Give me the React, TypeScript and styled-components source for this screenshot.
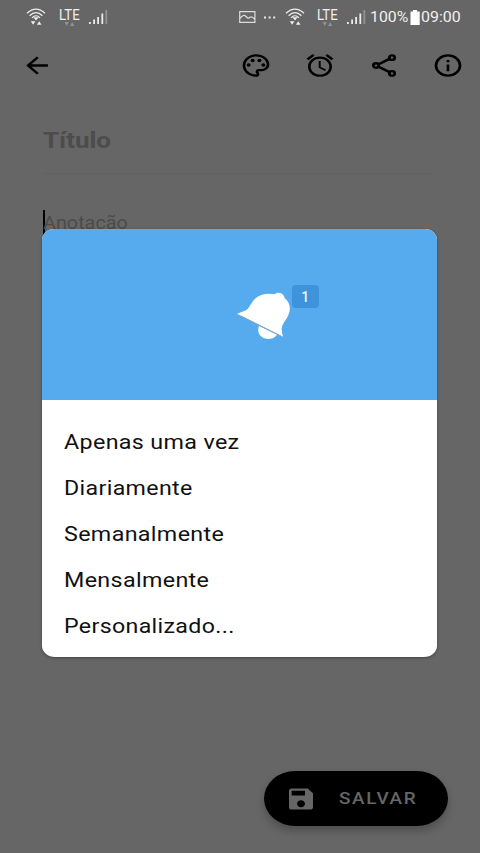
import React from "react";
import styled, { createGlobalStyle } from "styled-components";

const GlobalStyle = createGlobalStyle`
  * { box-sizing: border-box; }
  body { margin: 0; background: #666; font-family: Roboto, "Liberation Sans", sans-serif; }
`;

const Screen = styled.div`
  position: relative;
  width: 480px;
  height: 853px;
  overflow: hidden;
  background: #666;
  display: flex;
  flex-direction: column;
`;

/* Text widened horizontally, anchored at its left edge */
const Wide = styled.span<{ $x: number }>`
  display: inline-block;
  white-space: nowrap;
  transform: scaleX(${(p) => p.$x});
  transform-origin: left center;
`;

const StatusBar = styled.header`
  height: 33px;
  flex: none;
  display: flex;
  justify-content: space-between;
  padding: 1px 18px 0 26px;
  color: #f0f0f0;
  font-size: 14px;
  line-height: 33px;
`;

const StatusGroup = styled.div`
  display: flex;
  align-items: center;
`;

const StatusSlot = styled.div<{ $w: number; $gap?: number }>`
  width: ${(p) => p.$w}px;
  margin-left: ${(p) => p.$gap ?? 0}px;
  height: 33px;
  flex: none;
  display: flex;
  align-items: center;
`;

const LteBox = styled.div`
  width: 22px;
  height: 33px;
  margin-left: 12px;
  flex: none;
  display: flex;
  flex-direction: column;
  padding-top: 7px;
  line-height: 14px;
  font-size: 14px;
`;

const AppBar = styled.nav`
  height: 64px;
  flex: none;
  display: flex;
  align-items: center;
  justify-content: space-between;
  padding: 0 16px 0 21px;
`;

const Actions = styled.div`
  display: flex;
  gap: 32px;
`;

const IconButton = styled.button`
  border: 0;
  padding: 0;
  background: none;
  color: #000;
  display: flex;
  svg { display: block; }
`;

const Editor = styled.main`
  flex: 1;
  padding: 27px 47px 0 43px;
`;

const TitleField = styled.div`
  height: 50px;
  border-bottom: 1px solid #616161;
  color: #4c4c4c;
  font-size: 22px;
  font-weight: 700;
  line-height: 34px;
`;

const NoteField = styled.div`
  display: flex;
  align-items: center;
  height: 26px;
  margin-top: 35px;
  color: #4b4b4b;
  font-size: 18px;
`;

const Caret = styled.span`
  width: 2px;
  height: 25px;
  margin-right: -2px;
  background: #000;
`;

const SaveButton = styled.button`
  position: absolute;
  left: 264px;
  top: 771px;
  width: 184px;
  height: 55px;
  border: 0;
  border-radius: 32px / 28px;
  padding: 0 0 0 21px;
  display: flex;
  align-items: center;
  background: #000;
  color: #666;
  font: 500 16px Roboto, "Liberation Sans", sans-serif;
  letter-spacing: 1.4px;
  box-shadow: 0 5px 9px rgba(0, 0, 0, 0.24);
  svg { margin-right: 22px; flex: none; }
`;

const Dialog = styled.section`
  position: absolute;
  left: 42.4px;
  top: 229px;
  width: 394.8px;
  height: 428px;
  border-radius: 12px 12px 13px 13px / 11px;
  overflow: hidden;
  background: #fff;
  box-shadow: 0 1px 3px rgba(0, 0, 0, 0.35);
`;

const Banner = styled.div`
  height: 171px;
  background: #56abee;
  display: flex;
  align-items: flex-start;
  padding: 56px 0 0 194.6px;
`;

const Bell = styled.svg`
  display: block;
  flex: none;
  margin-top: 6px;
`;

const Badge = styled.span`
  width: 27px;
  height: 23px;
  margin-left: -1.3px;
  border-radius: 4px;
  display: flex;
  align-items: center;
  justify-content: center;
  background: #3f93da;
  color: #e8f6ff;
  font-size: 14px;
  font-weight: 500;
`;

const OptionList = styled.ul`
  margin: 0;
  padding: 19px 0 0 21.6px;
  list-style: none;
`;

const Option = styled.li`
  height: 46px;
  line-height: 46px;
  color: #111;
  font-size: 20px;
  letter-spacing: 0.3px;
`;

const Icon = ({ children, w = 32, h = 27 }: { children: React.ReactNode; w?: number; h?: number }) => (
  <svg width={w} height={h} viewBox="0 0 24 24" preserveAspectRatio="none" fill="currentColor">
    {children}
  </svg>
);

const Wifi = () => (
  <svg width="20" height="18" viewBox="0 0 20 18" fill="none" stroke="#f0f0f0" strokeWidth="1.2">
    <path d="M1 5.3Q10-3.2 19 5.3M3.6 7.7Q10 1.6 16.4 7.7M6 9.8Q10 5.7 14 9.8" />
    <path d="M7.4 9.2h5.2L10 12.4zM4.8 13.2h4.6L7.1 16.8zM10.9 16.8h4.6L13.2 13.2z" fill="#f0f0f0" stroke="none" />
  </svg>
);

const Signal = () => (
  <svg width="19" height="15" viewBox="0 0 19 15" fill="#ececec">
    <path d="M0 12h1.8v2H0zM4.2 9.5H6V14H4.2zM8.2 7H10v7H8.2zM12.4 3.5h1.8v10.5h-1.8z" />
    <path d="M16.4 0h1.8v14h-1.8z" fill="#929292" />
  </svg>
);

const Lte = () => (
  <LteBox>
    <Wide $x={0.94}>LTE</Wide>
    <svg width="22" height="4" viewBox="0 0 22 4" fill="#929292">
      <path d="M5.5 0h4.4L7.7 4zM11 4h4.4L13.2 0z" />
    </svg>
  </LteBox>
);

const options = [
  { label: "Apenas uma vez", x: 1.164 },
  { label: "Diariamente", x: 1.158 },
  { label: "Semanalmente", x: 1.164 },
  { label: "Mensalmente", x: 1.164 },
  { label: "Personalizado...", x: 1.158 },
];

export default function App() {
  return (
    <>
      <GlobalStyle />
      <Screen>
        <StatusBar>
          <StatusGroup>
            <StatusSlot $w={21}><Wifi /></StatusSlot>
            <Lte />
            <StatusSlot $w={19} $gap={8}><Signal /></StatusSlot>
          </StatusGroup>
          <StatusGroup>
            <StatusSlot $w={17}>
              <svg width="17" height="12" viewBox="0 0 17 12" fill="none" stroke="#ddd" strokeWidth="1.2">
                <path d="M.7.7h15.2v10.6H.7zM1 7.5Q4.5 2.5 7 5.5T11 6.2Q13 5 16 8.6" />
              </svg>
            </StatusSlot>
            <StatusSlot $w={12} $gap={8}>
              <svg width="12" height="3" fill="#e8e8e8"><path d="M0 .6h2v2H0zM4.6.6h2v2h-2zM9.2.6h2v2h-2z" /></svg>
            </StatusSlot>
            <StatusSlot $w={20} $gap={9}><Wifi /></StatusSlot>
            <Lte />
            <StatusSlot $w={19} $gap={8}><Signal /></StatusSlot>
            <StatusSlot $w={40} $gap={4}><Wide $x={1.13}>100%</Wide></StatusSlot>
            <StatusSlot $w={11}>
              <svg width="10" height="15" fill="#fff"><path d="M3 0h4v1.5h2.7V15H.5V1.5H3z" /></svg>
            </StatusSlot>
            <StatusSlot $w={41}><Wide $x={1.14}>09:00</Wide></StatusSlot>
          </StatusGroup>
        </StatusBar>

        <AppBar>
          <IconButton aria-label="Voltar">
            <Icon>
              <path d="M20.2 10.9H7.8l5.5-5.5L11.9 4l-8 8 8 8 1.4-1.4-5.5-5.5h12.4z" />
            </Icon>
          </IconButton>
          <Actions>
            <IconButton aria-label="Cor">
              <Icon>
                <path d="M12 22C6.49 22 2 17.51 2 12S6.49 2 12 2s10 4.04 10 9c0 3.31-2.69 6-6 6h-1.77c-.28 0-.5.22-.5.5 0 .12.05.23.13.33.41.47.64 1.06.64 1.67A2.5 2.5 0 0 1 12 22zm0-18c-4.41 0-8 3.59-8 8s3.59 8 8 8c.28 0 .5-.22.5-.5a.54.54 0 0 0-.14-.35c-.41-.46-.63-1.05-.63-1.65a2.5 2.5 0 0 1 2.5-2.5H16c2.21 0 4-1.79 4-4 0-3.86-3.59-7-8-7z" />
                <circle cx="6.5" cy="11.5" r="1.5" />
                <circle cx="9.5" cy="7.5" r="1.5" />
                <circle cx="14.5" cy="7.5" r="1.5" />
                <circle cx="17.5" cy="11.5" r="1.5" />
              </Icon>
            </IconButton>
            <IconButton aria-label="Lembrete">
              <Icon>
                <path d="M22 5.72l-4.6-3.86-1.29 1.53 4.6 3.86L22 5.72zM7.88 3.39L6.6 1.86 2 5.71l1.29 1.53 4.59-3.85zM12.5 8H11v6l4.75 2.85.75-1.23-4-2.37V8zM12 4c-4.97 0-9 4.03-9 9s4.02 9 9 9c4.97 0 9-4.03 9-9s-4.03-9-9-9zm0 16c-3.87 0-7-3.13-7-7s3.13-7 7-7 7 3.13 7 7-3.13 7-7 7z" />
              </Icon>
            </IconButton>
            <IconButton aria-label="Compartilhar">
              <Icon>
                <g fill="none" stroke="currentColor" strokeWidth="2.1">
                  <circle cx="6" cy="12" r="2" />
                  <circle cx="18" cy="5" r="2" />
                  <circle cx="18" cy="19" r="2" />
                  <path d="M8 10.9l8.1-4.8M8 13.1l8.1 4.8" />
                </g>
              </Icon>
            </IconButton>
            <IconButton aria-label="Informações">
              <Icon>
                <circle cx="12" cy="12" r="9" fill="none" stroke="currentColor" strokeWidth="2" />
                <path d="M11 11h2v6h-2zM11 7h2v2h-2z" />
              </Icon>
            </IconButton>
          </Actions>
        </AppBar>

        <Editor>
          <TitleField><Wide $x={1.18}>Título</Wide></TitleField>
          <NoteField><Caret /><Wide $x={1.1}>Anotação</Wide></NoteField>
        </Editor>

        <SaveButton>
          <Icon w={32} h={28}>
            <path d="M17 3H5c-1.11 0-2 .9-2 2v14c0 1.1.89 2 2 2h14c1.1 0 2-.9 2-2V7l-4-4zm-5 16c-1.66 0-3-1.34-3-3s1.34-3 3-3 3 1.34 3 3-1.34 3-3 3zm3-10H5V5h10v4z" />
          </Icon>
          <Wide $x={1.18}>SALVAR</Wide>
        </SaveButton>

        <Dialog role="dialog">
          <Banner>
            <Bell width="56" height="50" viewBox="50 63 168 150">
              <path d="M50 131L77 121C86 116 91 99 104 86C119 72 142 69 162 73C172 64 190 68 193 84C207 95 212 113 206 130C201 148 188 157 184 174Q183 182 188 200Z" fill="#fff" />
              <path d="M116 168L170 194C162 207 140 211 126 202C114 194 111 180 116 168Z" fill="#fff" />
              <path d="M62 138L184 199" stroke="#8d9da8" strokeWidth="2.2" />
            </Bell>
            <Badge>1</Badge>
          </Banner>
          <OptionList>
            {options.map((o) => (
              <Option key={o.label}><Wide $x={o.x}>{o.label}</Wide></Option>
            ))}
          </OptionList>
        </Dialog>
      </Screen>
    </>
  );
}
